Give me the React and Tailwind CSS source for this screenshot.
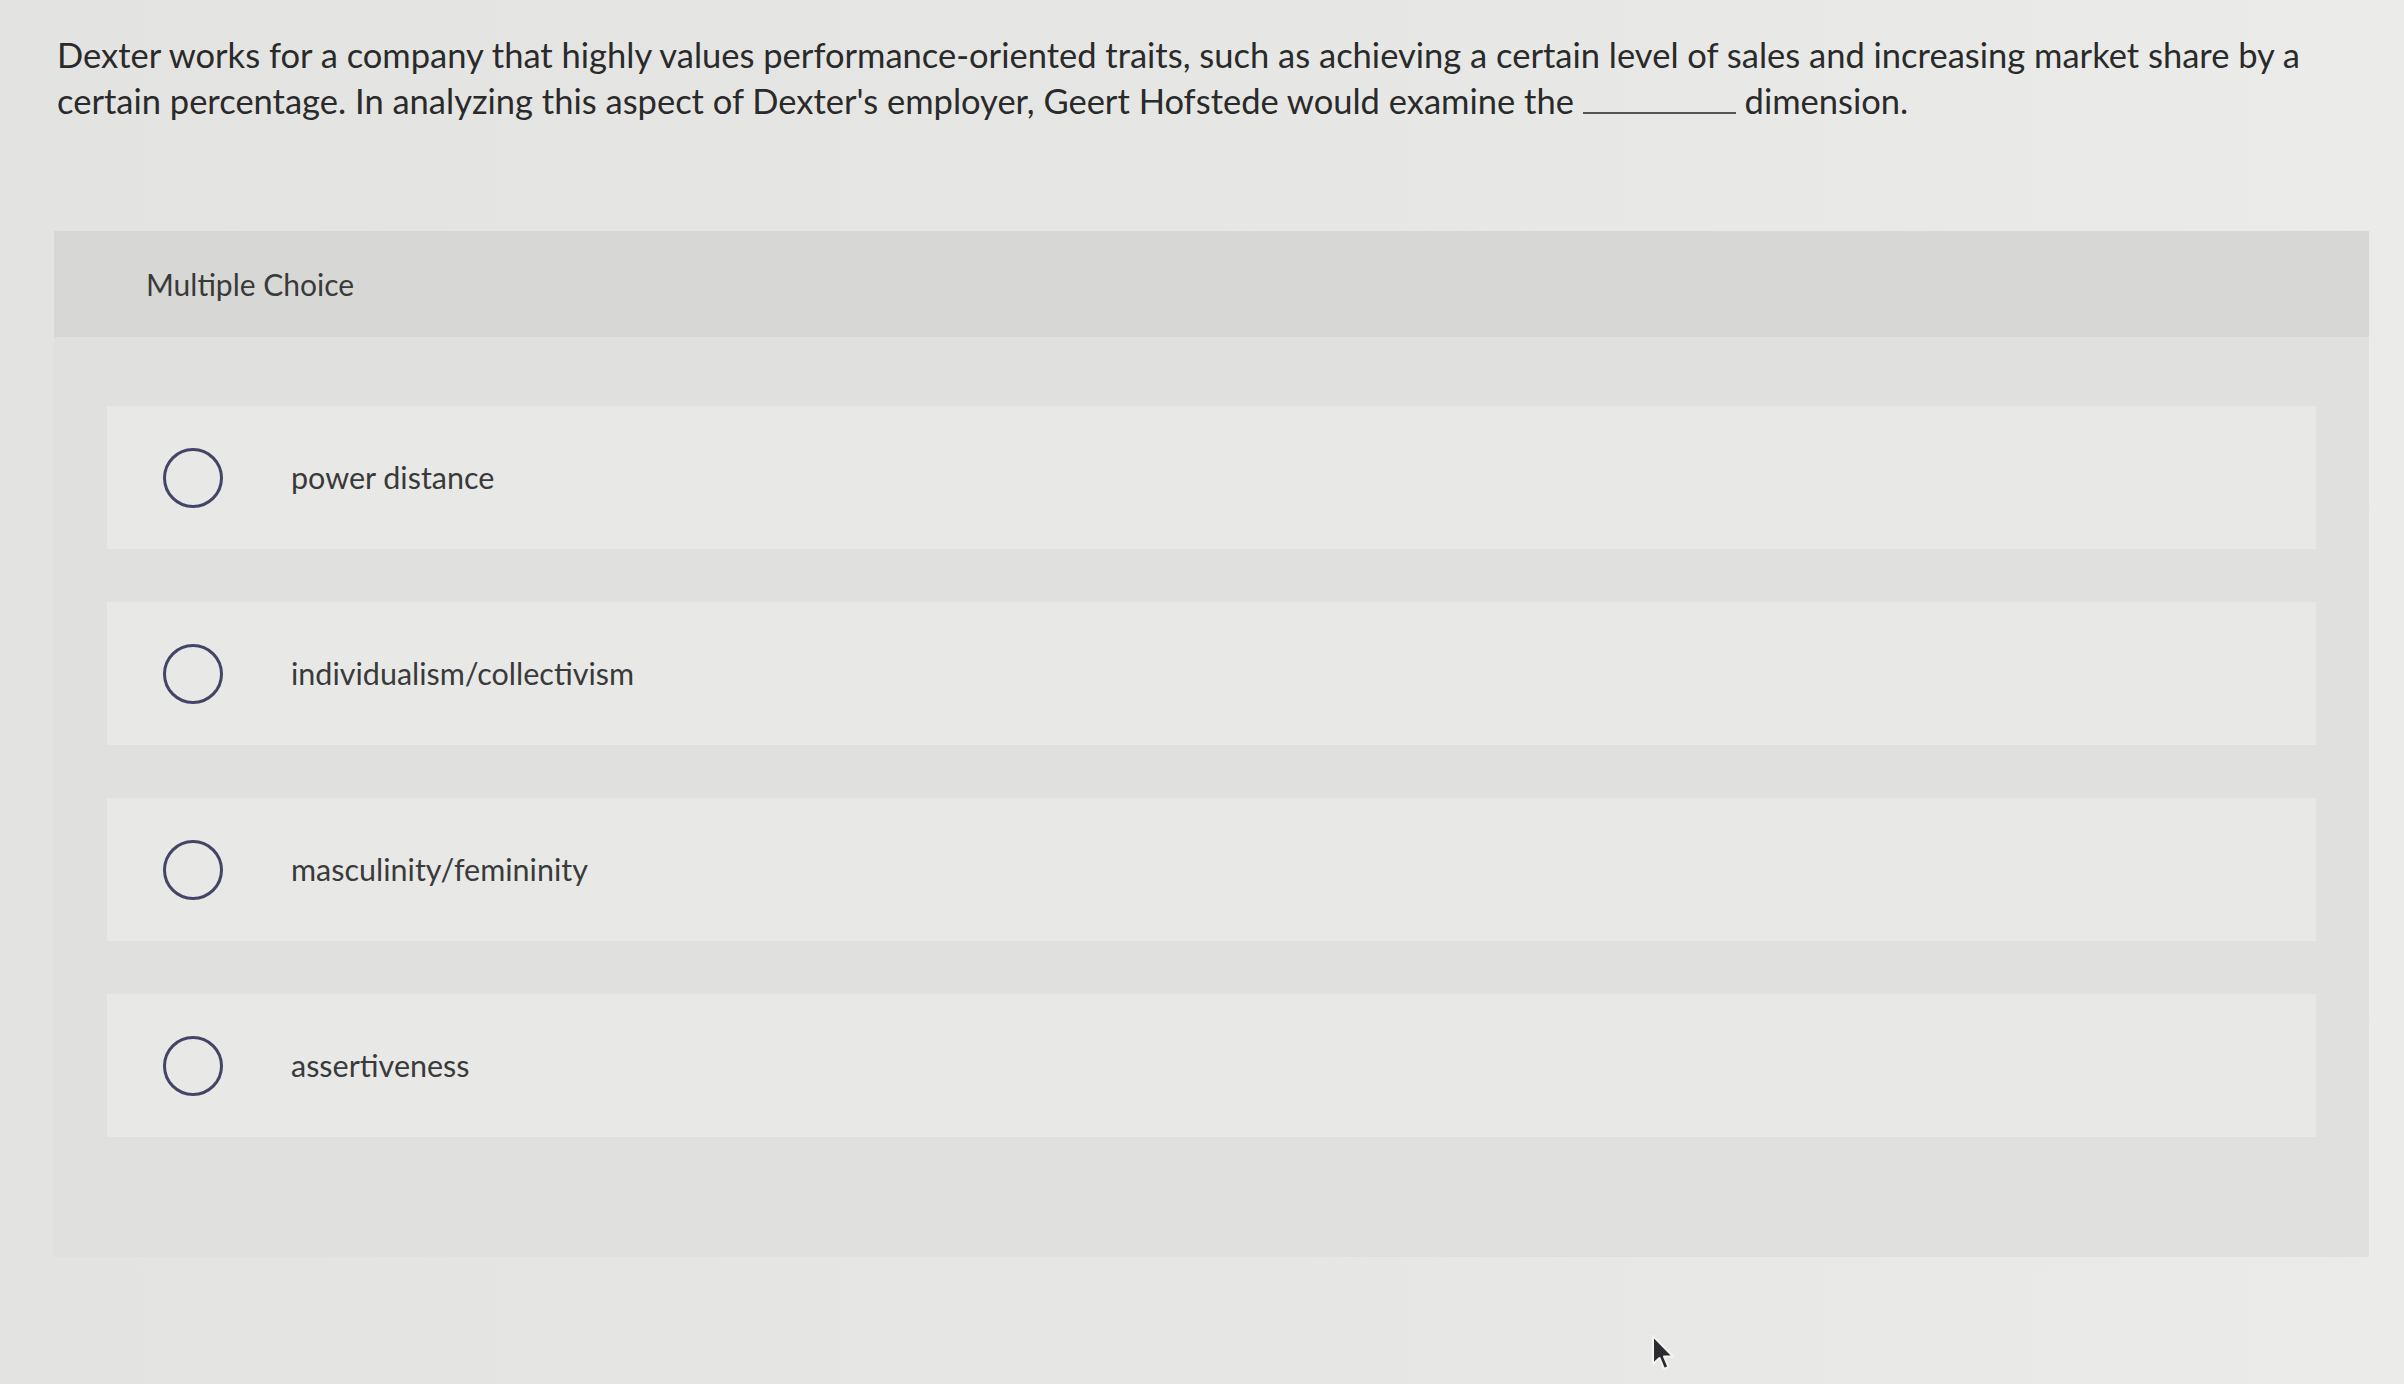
import React from 'react';

// ============================================
// QUESTION DATA
// ============================================

const options = [
    'power distance',
    'individualism/collectivism',
    'masculinity/femininity',
    'assertiveness',
];

// ============================================
// RADIO OPTION ROW
// ============================================

const OptionRow = ({ label }) => (
    <div className="flex h-[143px] items-center bg-[#e8e9e7] pl-[56px]">
        <div className="h-[60px] w-[60px] shrink-0 rounded-full border-[3px] border-[#434565]" />
        <span className="ml-[68px] text-[30.5px] text-[#3a3a3a]">{label}</span>
    </div>
);

// ============================================
// CURSOR
// ============================================

const Cursor = () => (
    <svg className="absolute left-[1650px] top-[1334px]" width="26" height="38" viewBox="0 0 26 38">
        <path d="M3 2 L3 30 L9.5 24 L14 35 L18.5 33 L14 22.5 L23 22.5 Z" fill="#2c2c30" stroke="#f4f4f4" strokeWidth="2" strokeLinejoin="round" />
    </svg>
);

export default function App() {
    return (
        <div className="relative min-h-screen w-full bg-gradient-to-r from-[#e3e4e2] via-[#e6e7e5] to-[#ebebea] font-['Lato',sans-serif]">
            {/* Question */}
            <div className="pl-[57px] pr-[60px] pt-[32px] text-[34.5px] leading-[46px] text-[#2a2a2a]">
                Dexter works for a company that highly values performance-oriented traits, such as achieving a certain level of sales and increasing market share by a certain percentage. In analyzing this aspect of Dexter's employer, Geert Hofstede would examine the{' '}
                <span className="inline-block h-[2px] w-[153px] bg-[#555]" />{' '}
                dimension.
            </div>

            {/* Multiple choice panel */}
            <div className="ml-[54px] mr-[35px] mt-[107px] bg-[#e0e1df]">
                <div className="flex h-[106px] items-center bg-[#d7d8d6] pl-[92px] text-[30px] text-[#3a3a3a]">
                    Multiple Choice
                </div>
                <div className="flex flex-col gap-[53px] px-[53px] pt-[69px] pb-[120px]">
                    {options.map(o => (
                        <OptionRow key={o} label={o} />
                    ))}
                </div>
            </div>

            <Cursor />
        </div>
    );
}
